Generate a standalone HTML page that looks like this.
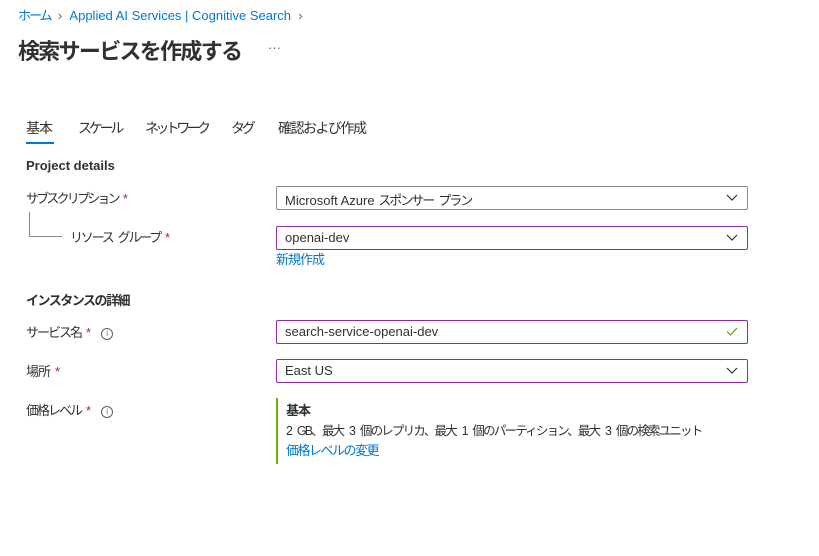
<!DOCTYPE html>
<html><head><meta charset="utf-8"><style>
body{margin:0;width:819px;height:556px;background:#fff;font-family:"Segoe UI","Liberation Sans","Noto Sans CJK JP",sans-serif;color:#323130;font-size:13px;position:relative;overflow:hidden}
.a{position:absolute;white-space:nowrap}
.j{letter-spacing:-2px;word-spacing:4px}
.link{color:#0078d4}
.inp{position:absolute;left:276px;width:470px;height:22px;border:1px solid #8a8886;border-radius:2px;box-sizing:content-box}
.inp>span{position:absolute;left:8px;top:3px;font-size:13px;white-space:nowrap}
.p{border-color:#8a2da5}
.chev{position:absolute;right:9px;top:7px}
.st{color:#a4262c;letter-spacing:0;margin-left:5px}
.info{display:inline-block;width:10px;height:10px;border:1px solid #605e5c;border-radius:50%;font-size:8px;line-height:10px;text-align:center;vertical-align:1px;margin-left:10px;color:#605e5c;letter-spacing:0}
</style></head><body>
<div class="a link" style="left:18px;top:5px"><span class="j">ホーム</span> <span style="color:#605e5c">&nbsp;›&nbsp;</span> Applied AI Services | Cognitive Search <span style="color:#605e5c">&nbsp;›</span></div>
<div class="a" style="left:18px;top:34px;font-size:22px;font-weight:600;letter-spacing:-1.7px">検索サービスを作成する</div>
<div class="a" style="left:268px;top:40px;font-size:13px;color:#605e5c">···</div>
<div class="a" style="left:26px;top:118px;font-size:14px;letter-spacing:-1px">基本</div>
<div class="a" style="left:26px;top:142px;width:28px;height:2px;background:#0078d4"></div>
<div class="a" style="left:78px;top:118px;font-size:14px;letter-spacing:-3.2px">スケール</div>
<div class="a" style="left:145px;top:118px;font-size:14px;letter-spacing:-3.6px">ネットワーク</div>
<div class="a" style="left:231px;top:118px;font-size:14px;letter-spacing:-3.2px">タグ</div>
<div class="a" style="left:278px;top:118px;font-size:14px;letter-spacing:-1.5px">確認および作成</div>
<div class="a" style="left:26px;top:158px;font-weight:600">Project details</div>
<div class="a" style="left:26px;top:188px;letter-spacing:-2.8px">サブスクリプション<span class="st">*</span></div>
<div class="a" style="left:29px;top:212px;width:1px;height:24px;background:#8a8886"></div>
<div class="a" style="left:29px;top:236px;width:33px;height:1px;background:#8a8886"></div>
<div class="a" style="left:70px;top:227px;letter-spacing:-2.2px">リソース<span style="margin-left:5px">グループ</span><span class="st">*</span></div>
<div class="inp" style="top:186px"><span>Microsoft Azure <span style="letter-spacing:-2px">スポンサー<span style="margin-left:5px">プラン</span></span></span><svg class="chev" width="12" height="8" viewBox="0 0 12 8"><path d="M1 1l5 5 5-5" fill="none" stroke="#323130" stroke-width="1.2"/></svg></div>
<div class="inp p" style="top:226px"><span>openai-dev</span><svg class="chev" width="12" height="8" viewBox="0 0 12 8"><path d="M1 1l5 5 5-5" fill="none" stroke="#323130" stroke-width="1.2"/></svg></div>
<div class="a link" style="left:276px;top:249px;letter-spacing:-1px">新規作成</div>
<div class="a" style="left:26px;top:290px;font-weight:600;letter-spacing:-1.5px">インスタンスの詳細</div>
<div class="a" style="left:26px;top:322px;letter-spacing:-2px">サービス名<span class="st">*</span><span class="info">i</span></div>
<div class="inp p" style="top:320px"><span>search-service-openai-dev</span><svg class="chev" width="12" height="9" viewBox="0 0 12 9" style="top:6px"><path d="M1 4.5l3.5 3.5 6.5-7" fill="none" stroke="#57a300" stroke-width="1.2"/></svg></div>
<div class="a" style="left:26px;top:361px;letter-spacing:-1px">場所<span class="st">*</span></div>
<div class="inp p" style="top:359px"><span>East US</span><svg class="chev" width="12" height="8" viewBox="0 0 12 8"><path d="M1 1l5 5 5-5" fill="none" stroke="#323130" stroke-width="1.2"/></svg></div>
<div class="a" style="left:26px;top:400px;letter-spacing:-2px">価格レベル<span class="st">*</span><span class="info">i</span></div>
<div class="a" style="left:276px;top:398px;width:2px;height:66px;background:#6bb700"></div>
<div class="a" style="left:286px;top:400px;font-weight:600;letter-spacing:-1px">基本</div>
<div class="a" style="left:286px;top:420px;font-size:12.5px;letter-spacing:-1.8px;word-spacing:4px">2 GB、最大 3 個のレプリカ、最大 1 個のパーティション、最大 3 個の検索ユニット</div>
<div class="a link" style="left:286px;top:440px;letter-spacing:-1.5px">価格レベルの変更</div>
</body></html>
